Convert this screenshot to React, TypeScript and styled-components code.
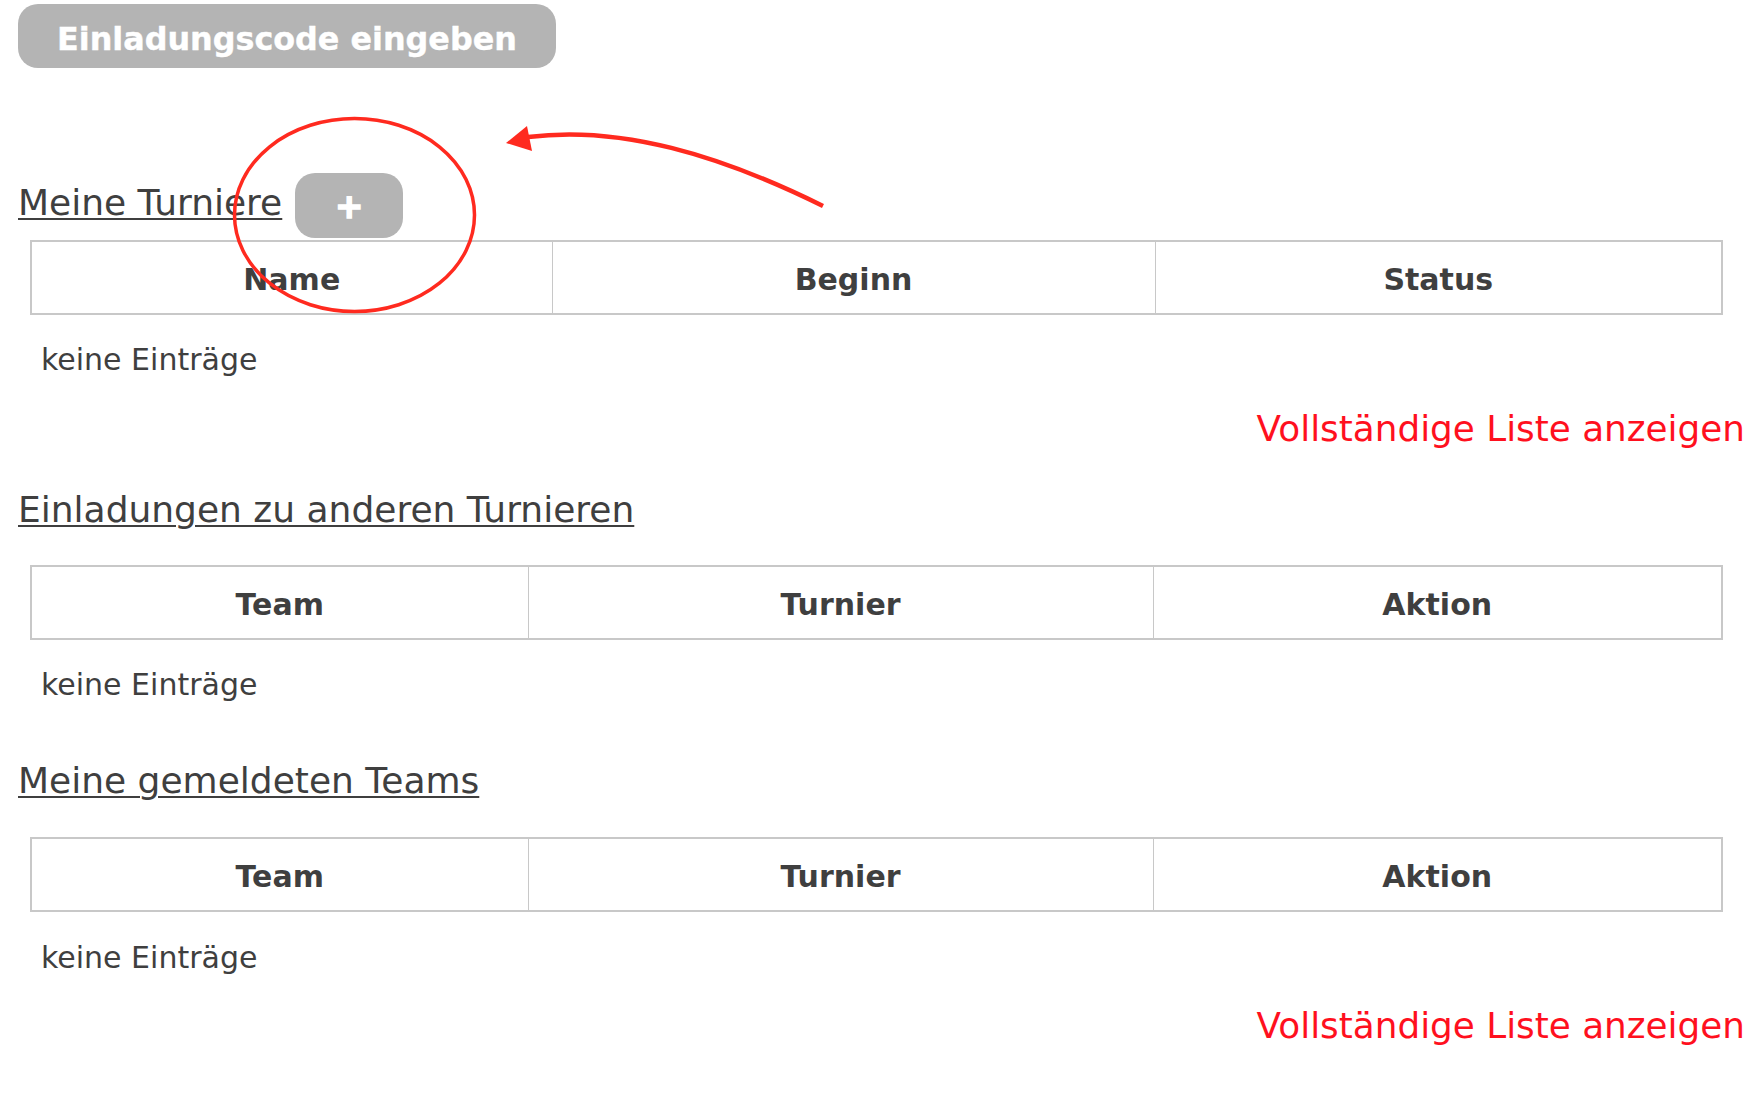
import styled, { createGlobalStyle } from 'styled-components';

const GlobalStyle = createGlobalStyle`
  html, body {
    margin: 0;
    padding: 0;
    background: #ffffff;
  }
  body {
    font-family: "DejaVu Sans", Verdana, sans-serif;
    color: #3f3f3f;
  }
`

const Page = styled.div`
  position: relative;
  width: 1758px;
  min-height: 1116px;
  box-sizing: border-box;
  padding: 4px 13px 0 18px;
  display: flex;
  flex-direction: column;
`

const InviteButton = styled.button`
  width: 538px;
  height: 64px;
  padding: 6px 0 0;
  border: none;
  border-radius: 20px;
  background: #b4b4b4;
  color: #ffffff;
  font-family: "DejaVu Sans", Verdana, sans-serif;
  font-weight: bold;
  font-size: 31.8px;
  line-height: 58px;
  text-align: center;
  -webkit-text-stroke: 0.4px #ffffff;
  cursor: pointer;
`

const TitleRow = styled.div<{ $top: number }>`
  display: flex;
  align-items: flex-start;
  margin-top: ${p => p.$top}px;
`

const SectionTitle = styled.h3<{ $top?: number }>`
  margin: ${p => p.$top ?? 0}px 0 0;
  font-size: 36px;
  font-weight: normal;
  line-height: 42px;
  color: #3f3f3f;
  text-decoration: underline;
  text-decoration-thickness: 2px;
  text-underline-offset: 3px;
`

const AddButton = styled.button`
  width: 108px;
  height: 65px;
  margin-left: 13px;
  padding: 1px 0 0;
  border: none;
  border-radius: 20px;
  background: #b4b4b4;
  color: #ffffff;
  font-family: "DejaVu Sans", Verdana, sans-serif;
  font-weight: bold;
  font-size: 34px;
  line-height: 64px;
  -webkit-text-stroke: 1.6px #ffffff;
  cursor: pointer;
`

const Table = styled.table<{ $top: number }>`
  width: 1693px;
  margin: ${p => p.$top}px 0 0 12px;
  border-collapse: collapse;
  table-layout: fixed;
  border: 2px solid #c8c8c8;
`

const HeadCell = styled.th`
  padding: 20px 0 15px;
  font-size: 30px;
  line-height: 36px;
  font-weight: bold;
  text-align: center;
  color: #3f3f3f;
  border-left: 1px solid #c8c8c8;

  &:first-child {
    border-left: none;
  }
`

const Empty = styled.p<{ $top: number }>`
  margin: ${p => p.$top}px 0 0;
  padding-left: 23px;
  font-size: 30px;
  line-height: 36px;
  color: #3f3f3f;
`

const FullListLink = styled.a<{ $top: number }>`
  align-self: flex-end;
  margin-top: ${p => p.$top}px;
  font-size: 35.8px;
  line-height: 42px;
  color: #ff101e;
  text-decoration: none;
  cursor: pointer;
`

const Annotation = styled.svg`
  position: absolute;
  left: 0;
  top: 0;
  pointer-events: none;
`

interface ListTableProps {
  top: number;
  columns: string[];
  widths: number[];
}

// Tabelle mit Kopfzeile, ohne Zeilen
const ListTable = ({ top, columns, widths }: ListTableProps) => (
  <Table $top={top}>
    <colgroup>
      {widths.map((w, i) => <col key={i} style={{ width: w }} />)}
    </colgroup>
    <thead>
      <tr>
        {columns.map(c => <HeadCell key={c}>{c}</HeadCell>)}
      </tr>
    </thead>
  </Table>
)

const App = () => {
  return (
    <>
      <GlobalStyle />
      <Page>
        <div>
          <InviteButton>Einladungscode eingeben</InviteButton>
        </div>

        <TitleRow $top={105}>
          <SectionTitle $top={9}>Meine Turniere</SectionTitle>
          <AddButton>+</AddButton>
        </TitleRow>
        <ListTable top={2} columns={['Name', 'Beginn', 'Status']} widths={[521, 603, 567]} />
        <Empty $top={27}>keine Einträge</Empty>
        <FullListLink $top={30}>Vollständige Liste anzeigen</FullListLink>

        <SectionTitle $top={39}>Einladungen zu anderen Turnieren</SectionTitle>
        <ListTable top={34} columns={['Team', 'Turnier', 'Aktion']} widths={[497, 625, 569]} />
        <Empty $top={27}>keine Einträge</Empty>

        <SectionTitle $top={57}>Meine gemeldeten Teams</SectionTitle>
        <ListTable top={35} columns={['Team', 'Turnier', 'Aktion']} widths={[497, 625, 569]} />
        <Empty $top={28}>keine Einträge</Empty>
        <FullListLink $top={29}>Vollständige Liste anzeigen</FullListLink>

        {/* rote Markierung über dem Screenshot */}
        <Annotation width="1758" height="1116" viewBox="0 0 1758 1116">
          <ellipse cx="354.5" cy="215" rx="120" ry="96.5" fill="none" stroke="#ff2a1f" strokeWidth="3.5" />
          <path d="M 823 206 C 720 155, 620 125, 528 137" fill="none" stroke="#ff2a1f" strokeWidth="4.5" />
          <polygon points="506,143 527,126 532,151" fill="#ff2a1f" />
        </Annotation>
      </Page>
    </>
  );
}

export default App;
